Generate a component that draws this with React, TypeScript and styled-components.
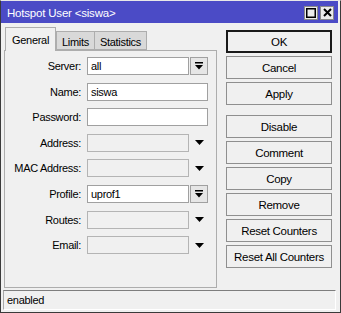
import styled, { createGlobalStyle } from 'styled-components';

const GlobalStyle = createGlobalStyle`
    html, body {
        margin: 0;
        padding: 0;
        background: #f0f0f0;
    }
    * {
        box-sizing: border-box;
    }
`;

const Window = styled.div`
    width: 341px;
    height: 313px;
    display: flex;
    flex-direction: column;
    background: #f0f0f0;
    border: 1px solid #3a3a3a;
    border-top-color: #e8e8e8;
    font-family: "Liberation Sans", Arial, sans-serif;
    font-size: 11px;
    letter-spacing: -0.3px;
    color: #000;
    overflow: hidden;
`;

const TitleBar = styled.div`
    height: 22px;
    flex: none;
    display: flex;
    align-items: center;
    justify-content: space-between;
    background: #4b4bc6;
    color: #fff;
    padding: 1px 4px 0 6px;
    margin-right: 2px;
`;

const Title = styled.span`
    font-size: 11.5px;
    letter-spacing: -0.2px;
`;

const TitleButtons = styled.div`
    display: flex;
    gap: 2px;
`;

const TitleButton = styled.div`
    width: 14px;
    height: 14px;
    display: flex;
    align-items: center;
    justify-content: center;
    background: #ececec;
    border: 1px solid #8a8a8a;
`;

const Body = styled.div`
    flex: 1;
    display: flex;
    padding: 2px 0 0 3px;
`;

const LeftPane = styled.div`
    width: 213px;
    display: flex;
    flex-direction: column;
`;

const TabRow = styled.div`
    display: flex;
    align-items: flex-end;
    height: 25px;
    padding-left: 1px;
    position: relative;
    z-index: 1;
`;

const Tab = styled.div<{ $active?: boolean }>`
    height: ${(p) => (p.$active ? '24px' : '19px')};
    margin-bottom: ${(p) => (p.$active ? '-1px' : '0')};
    padding: ${(p) => (p.$active ? '0 6px' : '2px 5px 0')};
    display: flex;
    align-items: center;
    background: ${(p) => (p.$active ? '#f0f0f0' : '#d9d9d9')};
    border: 1px solid #adadad;
    border-bottom: ${(p) => (p.$active ? 'none' : '1px solid #adadad')};
    margin-right: ${(p) => (p.$active ? '0' : '-1px')};
`;

const Panel = styled.div`
    flex: none;
    height: 238px;
    border: 1px solid #adadad;
    padding: 6px 0 0 0;
`;

const FieldGrid = styled.div`
    display: grid;
    grid-template-columns: 76px 121px;
    column-gap: 6px;
    row-gap: 7.6px;
    grid-auto-rows: 18px;
`;

const Label = styled.label`
    text-align: right;
    align-self: center;
    white-space: nowrap;
`;

const FieldRow = styled.div`
    display: flex;
    height: 18px;
`;

const Input = styled.div<{ $disabled?: boolean }>`
    flex: 1;
    min-width: 0;
    height: 18px;
    display: flex;
    align-items: center;
    padding-left: 3px;
    background: ${(p) => (p.$disabled ? '#f0f0f0' : '#fff')};
    border: 1px solid ${(p) => (p.$disabled ? '#b4b4b4' : '#a0a0a0')};
`;

const DropButton = styled.div`
    width: 18px;
    height: 18px;
    margin-left: 1px;
    flex: none;
    display: flex;
    align-items: center;
    justify-content: center;
    background: #e6e6e6;
    border: 1px solid #a0a0a0;
`;

const DropArrow = styled.div`
    width: 19px;
    flex: none;
    display: flex;
    align-items: center;
    justify-content: center;
    padding-left: 2px;
`;

const ButtonColumn = styled.div`
    margin-left: 9px;
    margin-top: 5px;
    width: 106px;
    display: flex;
    flex-direction: column;
    gap: 3px;
`;

const Button = styled.div<{ $default?: boolean; $spaced?: boolean }>`
    height: 23px;
    display: flex;
    align-items: center;
    justify-content: center;
    font-size: 11.5px;
    background: #f0f0f0;
    border: ${(p) => (p.$default ? '2px solid #1a1a1a' : '1px solid #8f8f8f')};
    margin-top: ${(p) => (p.$spaced ? '7px' : '0')};
`;

const StatusBar = styled.div`
    height: 20px;
    flex: none;
    margin: 0 4px 2px 2px;
    display: flex;
    align-items: center;
    padding-left: 3px;
    border: 1px solid #fff;
    border-top-color: #7e7e7e;
    border-left-color: #a8a8a8;
`;

const SelectIcon = () => (
    <svg width="8" height="8" viewBox="0 0 8 8">
        <rect x="0" y="0" width="8" height="1.5" fill="#000" />
        <polygon points="0,3 8,3 4,7.5" fill="#000" />
    </svg>
);

const Triangle = () => (
    <svg width="9" height="5" viewBox="0 0 9 5">
        <polygon points="0,0 9,0 4.5,5" fill="#000" />
    </svg>
);

type Field = {
    label: string;
    value?: string;
    kind: 'select' | 'text' | 'list';
};

const fields: Field[] = [
    { label: 'Server:', value: 'all', kind: 'select' },
    { label: 'Name:', value: 'siswa', kind: 'text' },
    { label: 'Password:', value: '', kind: 'text' },
    { label: 'Address:', kind: 'list' },
    { label: 'MAC Address:', kind: 'list' },
    { label: 'Profile:', value: 'uprof1', kind: 'select' },
    { label: 'Routes:', kind: 'list' },
    { label: 'Email:', kind: 'list' },
];

const buttons = [
    'OK', 'Cancel', 'Apply', 'Disable', 'Comment', 'Copy', 'Remove', 'Reset Counters', 'Reset All Counters',
];

export default function App() {
    return (
        <>
            <GlobalStyle />
            <Window>
                <TitleBar>
                    <Title>Hotspot User &lt;siswa&gt;</Title>
                    <TitleButtons>
                        <TitleButton>
                            <svg width="10" height="10" viewBox="0 0 10 10">
                                <rect x="0.75" y="0.75" width="8.5" height="8.5" fill="none" stroke="#000" strokeWidth="1.5" />
                            </svg>
                        </TitleButton>
                        <TitleButton>
                            <svg width="9" height="9" viewBox="0 0 9 9">
                                <path d="M1 1 L8 8 M8 1 L1 8" stroke="#000" strokeWidth="2" />
                            </svg>
                        </TitleButton>
                    </TitleButtons>
                </TitleBar>
                <Body>
                    <LeftPane>
                        <TabRow>
                            <Tab $active>General</Tab>
                            <Tab>Limits</Tab>
                            <Tab>Statistics</Tab>
                        </TabRow>
                        <Panel>
                            <FieldGrid>
                                {fields.map((f) => (
                                    <>
                                        <Label key={`${f.label}_l`}>{f.label}</Label>
                                        <FieldRow key={`${f.label}_f`}>
                                            <Input $disabled={f.kind === 'list'}>{f.value}</Input>
                                            {f.kind === 'select' && <DropButton><SelectIcon /></DropButton>}
                                            {f.kind === 'list' && <DropArrow><Triangle /></DropArrow>}
                                        </FieldRow>
                                    </>
                                ))}
                            </FieldGrid>
                        </Panel>
                    </LeftPane>
                    <ButtonColumn>
                        {buttons.map((b, i) => (
                            <Button key={b} $default={i === 0} $spaced={b === 'Disable'}>{b}</Button>
                        ))}
                    </ButtonColumn>
                </Body>
                <StatusBar>enabled</StatusBar>
            </Window>
        </>
    );
}
